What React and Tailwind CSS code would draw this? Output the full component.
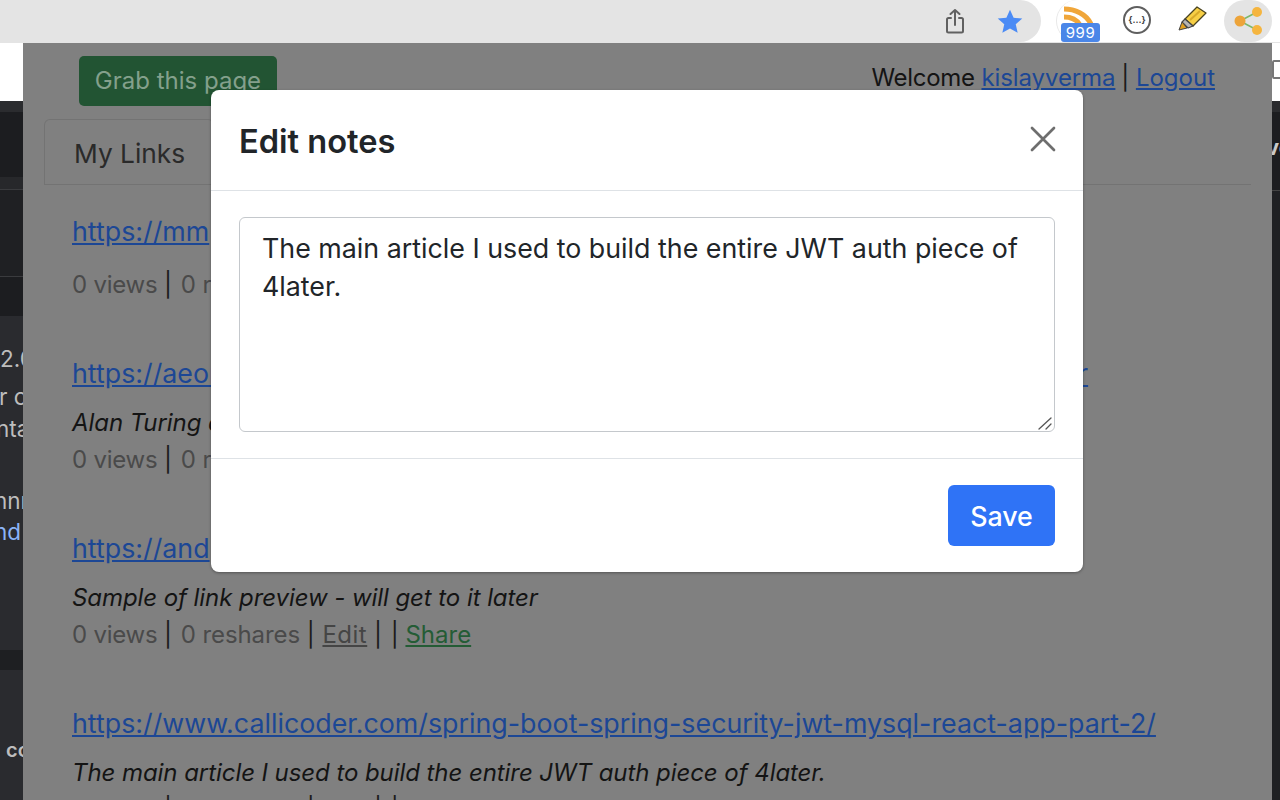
const Sep = ({ className = '' }) => <span className={`text-[#1c1c1c] ${className}`}>|</span>

const Meta = () => (
  <p className="text-[#4a4a4a] text-[24px] leading-[37px] whitespace-nowrap">
    <span className="tracking-[-0.25px]">0 views</span> <Sep /> <span className="ml-[2px] tracking-[-0.1px]">0 reshares</span> <Sep />{' '}
    <a className="ml-[1px] underline text-[#454545] tracking-[0.5px]">Edit</a> <Sep /> <Sep className="ml-[2px]" />{' '}
    <a className="underline text-[#245c35]">Share</a>
  </p>
)

const LinkRow = ({ url, note, className }) => (
  <div className={className}>
    <a className="block text-[26.8px] leading-[36px] underline text-[#1c4795] whitespace-nowrap">{url}</a>
    {note && <p className="mt-[14px] text-[24px] leading-[36px] italic text-[#141414] whitespace-nowrap tracking-[-0.07px]">{note}</p>}
    <div className={note ? '' : 'mt-[17px]'}>
      <Meta />
    </div>
  </div>
)

function Toolbar() {
  return (
    <div className="h-[43px] shrink-0 bg-white border-b border-[#e4e4e4] flex items-start">
      <div className="w-[1041px] h-[42px] bg-[#e4e4e4] rounded-r-[21px] flex items-center justify-end pr-[17px] gap-[29px]">
        <svg width="24" height="28" viewBox="0 0 24 28" fill="none" stroke="#606060" strokeWidth="2" strokeLinecap="round" strokeLinejoin="round">
          <path d="M8 11H5.500A1.500 1.500 0 0 0 4 12.500V24a1.500 1.500 0 0 0 1.500 1.500h13A1.500 1.500 0 0 0 20 24V12.500A1.500 1.500 0 0 0 18.500 11H16" />
          <path d="M12 18V3M7.500 7 12 3l4.500 4" />
        </svg>
        <svg width="28" height="27" viewBox="0 0 24 24" fill="#4b8bf5">
          <path d="M12 1.500l3.200 7.100 7.700.800-5.800 5.100 1.700 7.600L12 18.200l-6.800 3.900 1.700-7.600L1.100 9.400l7.700-.800z" />
        </svg>
      </div>
      <div className="ml-[15px] relative w-[46px] h-[42px] rounded-l-[21px] border-l border-[#e8e8e8]">
        <svg className="absolute left-[6px] top-[5px]" width="30" height="20" viewBox="0 0 30 20" fill="none" stroke="#f0a63a" strokeWidth="5">
          <path d="M1 4c11 0 22 5 27 15" />
          <path d="M1 12c7 0 13 3 16 8" />
        </svg>
        <span className="absolute left-[4px] top-[23px] w-[39px] h-[19px] rounded-[3px] bg-[#4a86e8] text-white text-[15px] leading-[19px] text-center tracking-[0.5px]">999</span>
      </div>
      <div className="ml-[21px] mt-[6px] w-[28px] h-[28px] rounded-full border-2 border-[#5f5f5f] flex items-center justify-center text-[9px] font-bold text-[#444]">{'{...}'}</div>
      <svg className="ml-[26px] mt-[5px]" width="30" height="28" viewBox="0 0 30 28">
        <path d="M8 14 20 2l9 6-13 13z" fill="#f7cf45" stroke="#4a4420" strokeWidth="1.300" strokeLinejoin="round" />
        <path d="M13 15 23 6" stroke="#d9aa2a" strokeWidth="2" />
        <path d="M8 14l8 7-5 2-6-6z" fill="#b5b5b5" stroke="#444" strokeWidth="1.200" strokeLinejoin="round" />
        <path d="M5 17l-3 8 8-2z" fill="#e0a020" stroke="#444" strokeWidth="1" strokeLinejoin="round" />
      </svg>
      <div className="ml-[17px] w-[48px] h-[42px] rounded-full bg-[#e4e4e4] flex items-center justify-center">
        <svg width="30" height="28" viewBox="0 0 30 28">
          <path d="M7 14 24 5M7 14l17 9" stroke="#7cb86a" strokeWidth="1.500" />
          <circle cx="7" cy="14" r="5.500" fill="#eda43a" />
          <circle cx="24" cy="5" r="5" fill="#f5b53f" />
          <circle cx="24" cy="23" r="5" fill="#f5b53f" />
        </svg>
      </div>
    </div>
  )
}

function LeftStrip() {
  return (
    <div className="w-[23px] shrink-0 flex flex-col overflow-hidden text-[22.500px] text-[#bdbdbd] whitespace-nowrap">
      <div className="h-[58px] bg-white" />
      <div className="h-[11px] bg-[#2b2c2f]" />
      <div className="h-[65px] bg-[#1c1d20]" />
      <div className="h-[13px] bg-[#27282b] border-b border-[#3a3b3e]" />
      <div className="h-[87px] bg-[#1f2023] border-b border-[#3a3b3e]" />
      <div className="h-[39px] bg-[#1c1d20]" />
      <div className="h-[334px] bg-[#2a2b2f] flex flex-col">
        <span className="mt-[27px] leading-[32px]">2.0</span>
        <span className="mt-[6px] leading-[32px] -ml-[1px]">r c</span>
        <span className="leading-[32px] -ml-[4px]">nta</span>
        <span className="mt-[40px] leading-[32px] -ml-[6px]">nnn</span>
        <span className="leading-[30px] -ml-[6px] text-[#8ab4f8]">nd</span>
      </div>
      <div className="h-[20px] bg-[#1e1f22]" />
      <div className="flex-1 bg-[#2a2b2f] pl-[6px] pt-[66px] text-[20px] leading-[28px] font-semibold">co</div>
    </div>
  )
}

function RightStrip() {
  return (
    <div className="w-[8px] shrink-0 flex flex-col overflow-hidden text-[#c9c9c9]">
      <div className="h-[58px] bg-white pt-[17px]">
        <div className="w-[14px] h-[19px] border-2 border-[#777] rounded-[2px]" />
      </div>
      <div className="h-[11px] bg-[#2b2c2f]" />
      <div className="h-[78px] bg-[#1c1d20] pt-[20px] text-[22px] leading-[30px] font-bold -indent-[6px] whitespace-nowrap">ve</div>
      <div className="h-[1px] bg-[#444]" />
      <div className="flex-1 bg-[#1f2023]" />
    </div>
  )
}

function Modal() {
  return (
    <div className="absolute left-[188px] top-[47px] w-[872px] h-[482px] bg-white rounded-[8px] shadow-[0_1px_3px_rgba(0,0,0,0.35)] flex flex-col">
      <div className="h-[101px] shrink-0 border-b border-[#dee2e6] flex items-center justify-between pl-[28px] pr-[27px]">
        <h2 className="mt-[2px] text-[32.600px] font-semibold text-[#212529]">Edit notes</h2>
        <svg className="-mt-[2px]" width="26" height="26" viewBox="0 0 26 26" stroke="#6e6e6e" strokeWidth="2.700" strokeLinecap="round">
          <path d="M2 2l22 22M24 2 2 24" />
        </svg>
      </div>
      <div className="h-[268px] shrink-0 border-b border-[#dee2e6] pt-[26px] px-[28px]">
        <div className="relative">
          <textarea
            readOnly
            className="block w-full h-[215px] resize-none border border-[#c4c8cc] rounded-[6px] px-[22px] py-[11px] text-[26.800px] leading-[38px] text-[#212529] outline-none"
            value="The main article I used to build the entire JWT auth piece of 4later."
          />
          <svg className="absolute right-[2px] bottom-[2px]" width="15" height="13" viewBox="0 0 15 13" stroke="#555" strokeWidth="1.300" strokeLinecap="round">
            <path d="M1 12 13 1M8 12l5-5" />
          </svg>
        </div>
      </div>
      <div className="flex-1 flex items-start justify-end pr-[28px] pt-[26px]">
        <button className="w-[107px] h-[61px] pt-[2px] bg-[#2f73f6] rounded-[6px] text-white text-[26.800px] font-medium">Save</button>
      </div>
    </div>
  )
}

export default function App() {
  return (
    <div className="w-[1280px] h-[800px] overflow-hidden flex flex-col bg-white font-['Inter',sans-serif]">
      <Toolbar />
      <div className="flex-1 flex min-h-0">
        <LeftStrip />
        <div className="relative flex-1 bg-[#808080] overflow-hidden">
          <div className="flex items-start justify-between pl-[56px] pr-[57px] pt-[13px]">
            <button className="w-[198px] h-[50px] bg-[#225433] rounded-[5px] text-[#84a08c] text-[24px] leading-[50px]">Grab this page</button>
            <p className="text-[24px] leading-[44px] text-[#141414]">
              <span className="tracking-[-0.3px]">Welcome</span>{' '}
              <a className="underline text-[#1c4795] tracking-[-0.1px]">kislayverma</a> <Sep className="-ml-[1px]" />{' '}
              <a className="underline text-[#1c4795]">Logout</a>
            </p>
          </div>
          <div className="mt-[13px] ml-[21px] mr-[21px] h-[66px] border-b border-[#737373]">
            <div className="w-[170px] h-[66px] border border-b-0 border-[#737373] rounded-t-[6px] pl-[29px] text-[26.300px] leading-[68px] text-[#2a2a2a]">My Links</div>
          </div>
          <div className="pl-[49px]">
            <LinkRow className="mt-[28px]" url="https://mm" />
            <LinkRow
              className="mt-[52px]"
              url="https://aeon.co/essays/alan-turing-and-the-power-of-negative-thinking-to-user"
              note="Alan Turing a"
            />
            <LinkRow
              className="mt-[52px]"
              url="https://and"
              note="Sample of link preview - will get to it later"
            />
            <LinkRow
              className="mt-[52px]"
              url="https://www.callicoder.com/spring-boot-spring-security-jwt-mysql-react-app-part-2/"
              note="The main article I used to build the entire JWT auth piece of 4later."
            />
          </div>
          <Modal />
        </div>
        <RightStrip />
      </div>
    </div>
  )
}
